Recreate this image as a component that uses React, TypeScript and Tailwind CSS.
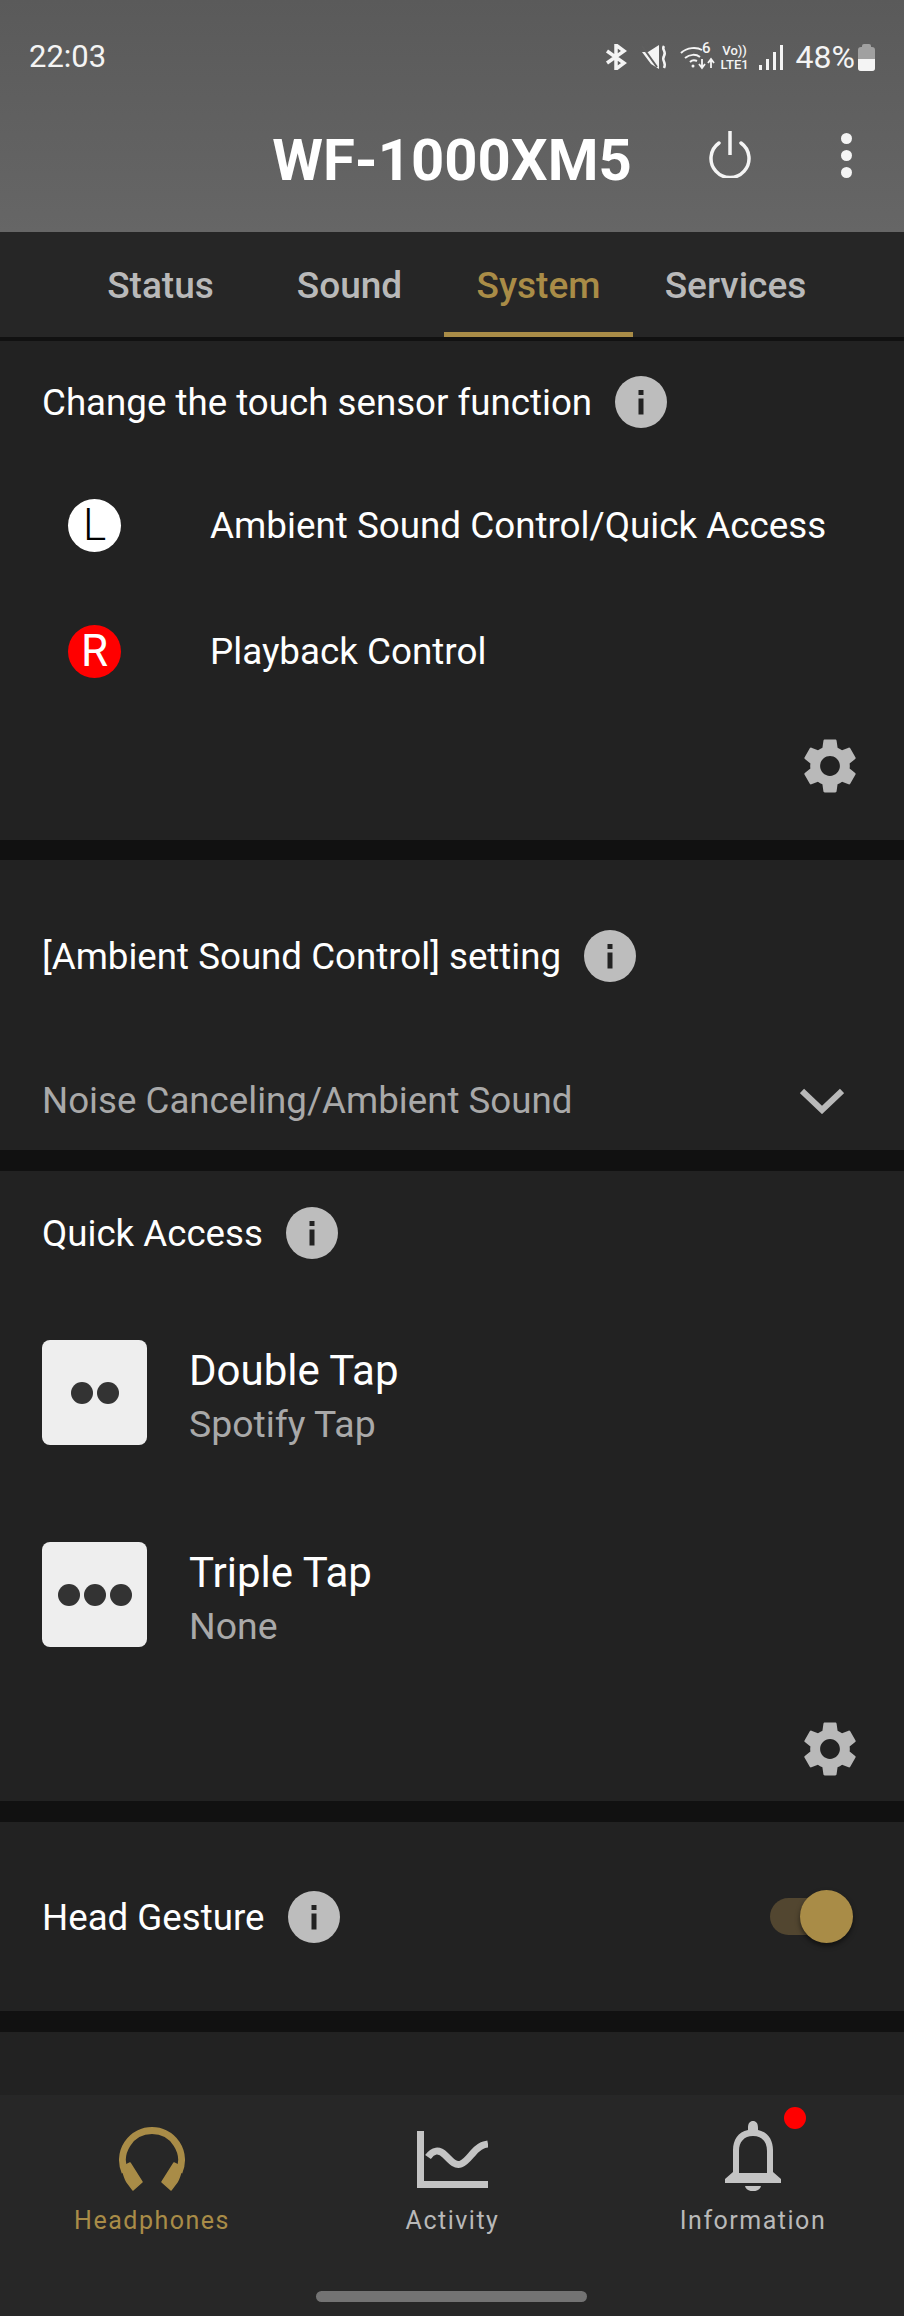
const GEAR =
  "M19.14 12.94c.04-.3.06-.61.06-.94 0-.32-.02-.64-.07-.94l2.03-1.58c.18-.14.23-.41.12-.61l-1.92-3.32c-.12-.22-.37-.29-.59-.22l-2.39.96c-.5-.38-1.03-.7-1.62-.94l-.36-2.54c-.04-.24-.24-.41-.48-.41h-3.84c-.24 0-.43.17-.47.41l-.36 2.54c-.59.24-1.13.57-1.62.94l-2.39-.96c-.22-.08-.47 0-.59.22L2.74 8.87c-.12.21-.08.47.12.61l2.03 1.58c-.05.3-.09.63-.09.94s.02.64.07.94l-2.03 1.58c-.18.14-.23.41-.12.61l1.92 3.32c.12.22.37.29.59.22l2.39-.96c.5.38 1.03.7 1.62.94l.36 2.54c.05.24.24.41.48.41h3.84c.24 0 .44-.17.47-.41l.36-2.54c.59-.24 1.13-.56 1.62-.94l2.39.96c.22.08.47 0 .59-.22l1.92-3.32c.12-.22.07-.47-.12-.61l-2.01-1.58zM12 15.6c-1.98 0-3.6-1.62-3.6-3.6s1.62-3.6 3.6-3.6 3.6 1.62 3.6 3.6-1.62 3.6-3.6 3.6z";

const Gear = () => (
  <svg viewBox="0 0 24 24" className="w-[66px] h-[66px] fill-[#b9b9b9]">
    <path d={GEAR} />
  </svg>
);

const Info = () => (
  <svg viewBox="0 0 52 52" className="w-[52px] h-[52px] shrink-0">
    <circle cx="26" cy="26" r="26" fill="#bdbdbd" />
    <rect x="23.5" y="14" width="5" height="5" fill="#222" />
    <rect x="23.5" y="22.5" width="5" height="16" fill="#222" />
  </svg>
);

const Title = ({ text }: { text: string }) => (
  <div className="flex items-center gap-[23px]">
    <span className="pt-[2px] text-[36.7px] leading-[44px] text-white">{text}</span>
    <Info />
  </div>
);

const Divider = () => <div className="h-[21px] shrink-0 bg-[#111111]" />;

const SensorRow = ({ letter, label, circle }: { letter: string; label: string; circle: string }) => (
  <div className="flex h-[126px] items-center pl-[68px]">
    <div className={`flex h-[53px] w-[53px] items-center justify-center rounded-full text-[44px] ${circle}`}>
      {letter}
    </div>
    <span className="ml-[89px] pt-[2px] text-[36.8px] text-white">{label}</span>
  </div>
);

const TapRow = ({ dots, title, value }: { dots: number; title: string; value: string }) => (
  <div className="flex h-[105px] items-center gap-[42px] pl-[42px]">
    <div className="flex h-[105px] w-[105px] items-center justify-center gap-[4px] rounded-[8px] bg-[#eeeeee]">
      {Array.from({ length: dots }).map((_, i) => (
        <div key={i} className="h-[22px] w-[22px] rounded-full bg-[#333333]" />
      ))}
    </div>
    <div className="flex flex-col pt-[8px]">
      <span className="text-[42px] leading-[52px] text-white">{title}</span>
      <span className="mt-[2px] text-[37.4px] leading-[50px] text-[#a9a9a9]">{value}</span>
    </div>
  </div>
);

const StatusBar = () => (
  <div className="flex h-[112px] items-center justify-between pl-[29px] pr-[29px] pt-[2px] text-[#f4f4f4]">
    <span className="text-[31px]">22:03</span>
    <div className="flex items-center">
      {/* bluetooth */}
      <svg viewBox="0 0 22 26" className="h-[26px] w-[22px]" fill="none" stroke="#f4f4f4" strokeWidth="3.5">
        <path d="M2 7l17 12-8 6V1l8 6L2 19" />
      </svg>
      {/* muted speaker with vibrate */}
      <svg viewBox="0 0 25 24" className="ml-[15px] h-[24px] w-[25px]" fill="#f4f4f4">
        <path d="M0 7h6l11-7v24L9 19z" />
        <path d="M0 1l15 21" stroke="#5f5f5f" strokeWidth="2" />
        <path d="M22 1c-3 4 3 5 0 10s3 6 0 12" fill="none" stroke="#f4f4f4" strokeWidth="2.5" />
      </svg>
      {/* wifi 6 */}
      <div className="relative ml-[13px] h-[26px] w-[35px]">
        <svg viewBox="0 0 35 26" className="h-[26px] w-[35px]" fill="none" stroke="#f4f4f4" strokeWidth="2">
          <path d="M1 9c6-6 16-6 21-3M5 14c5-4 11-4 15-1M10 18c2-2 5-2 7-1" />
          <circle cx="13" cy="22" r="1.5" fill="#f4f4f4" stroke="none" />
          <path d="M22 15v9M19 20l3 4 3-4M31 24v-9M28 19l3-4 3 4" strokeWidth="1.8" />
        </svg>
        <span className="absolute right-[4px] top-[-5px] text-[15px] font-medium leading-[18px]">6</span>
      </div>
      {/* volte */}
      <div className="ml-[5px] flex w-[30px] flex-col items-center text-[13px] font-medium leading-[13px]">
        <span className="mt-[1px]">Vo))</span>
        <span className="mt-[1px]">LTE1</span>
      </div>
      {/* signal */}
      <div className="ml-[9px] flex h-[25px] items-end gap-[4px]">
        <div className="h-[5px] w-[3px] bg-[#f4f4f4]" />
        <div className="h-[11px] w-[3px] bg-[#f4f4f4]" />
        <div className="h-[18px] w-[3px] bg-[#f4f4f4]" />
        <div className="h-[25px] w-[3px] bg-[#f4f4f4]" />
      </div>
      <span className="ml-[13px] text-[32px] leading-[36px]">48%</span>
      {/* battery */}
      <div className="relative ml-[3px] flex flex-col items-center">
        <div className="h-[3px] w-[9px] rounded-t-[2px] bg-[#a0a0a0]" />
        <div className="relative h-[24px] w-[17px] overflow-hidden rounded-[3px] bg-[#a0a0a0]">
          <div className="absolute inset-x-0 bottom-0 h-[12px] bg-[#f4f4f4]" />
        </div>
      </div>
    </div>
  </div>
);

const NavItem = ({ label, color, w, children }: { label: string; color: string; w: string; children: React.ReactNode }) => (
  <div className={`flex flex-col items-center ${w}`}>
    <div className="flex h-[69px] w-full items-end justify-center">{children}</div>
    <span className={`mt-[11px] text-[25px] leading-[38px] tracking-[1.5px] ${color}`}>{label}</span>
  </div>
);

export default function App() {
  return (
    <div className="flex h-[2316px] w-[904px] flex-col overflow-hidden bg-[#222222] font-['Roboto',sans-serif]">
      <div className="h-[232px] shrink-0 bg-gradient-to-b from-[#5a5a5a] to-[#666666]">
        <StatusBar />
        <div className="relative flex h-[96px] items-center justify-center">
          <span className="text-[58px] font-bold leading-[64px] text-white">WF-1000XM5</span>
          <svg viewBox="0 0 44 48" className="absolute left-[708px] top-[18px] h-[48px] w-[44px]" fill="none" stroke="#f4f4f4" strokeWidth="3.5">
            <path d="M22 1v24" />
            <path d="M11 13a19 19 0 1 0 22 0" strokeLinecap="round" />
          </svg>
          <div className="absolute left-[841px] top-[21px] flex flex-col gap-[6px]">
            <div className="h-[11px] w-[11px] rounded-full bg-[#f4f4f4]" />
            <div className="h-[11px] w-[11px] rounded-full bg-[#f4f4f4]" />
            <div className="h-[11px] w-[11px] rounded-full bg-[#f4f4f4]" />
          </div>
        </div>
      </div>

      <div className="flex h-[105px] shrink-0 bg-[#262626] pl-[66px] text-[37px] font-medium text-[#b9b9b9]">
        <div className="flex w-[189px] items-center justify-center pt-[3px]">Status</div>
        <div className="flex w-[189px] items-center justify-center pt-[3px]">Sound</div>
        <div className="flex w-[189px] items-center justify-center border-b-[5px] border-[#a98c47] pt-[7px] text-[#a98c47]">System</div>
        <div className="flex w-[205px] items-center justify-center pt-[3px]">Services</div>
      </div>
      <div className="h-[4px] shrink-0 bg-[#111111]" />

      <section className="h-[499px] shrink-0">
        <div className="flex h-[121px] items-center pl-[42px]">
          <Title text="Change the touch sensor function" />
        </div>
        <SensorRow letter="L" label="Ambient Sound Control/Quick Access" circle="bg-white font-light text-black" />
        <SensorRow letter="R" label="Playback Control" circle="bg-[#ff0000] text-white" />
        <div className="flex justify-end pr-[41px] pt-[19px]">
          <Gear />
        </div>
      </section>
      <div className="h-[20px] shrink-0 bg-[#111111]" />

      <section className="h-[290px] shrink-0 pl-[42px] pt-[70px]">
        <Title text="[Ambient Sound Control] setting" />
        <div className="mt-[96px] flex items-center justify-between pr-[60px]">
          <span className="text-[36.7px] leading-[46px] text-[#a9a9a9]">Noise Canceling/Ambient Sound</span>
          <svg viewBox="0 0 44 26" className="h-[26px] w-[44px]" fill="none" stroke="#b9b9b9" strokeWidth="6">
            <path d="M2 3l20 19L42 3" />
          </svg>
        </div>
      </section>
      <Divider />

      <section className="h-[630px] shrink-0">
        <div className="flex h-[124px] items-center pl-[42px]">
          <Title text="Quick Access" />
        </div>
        <div className="mt-[45px] flex flex-col gap-[97px]">
          <TapRow dots={2} title="Double Tap" value="Spotify Tap" />
          <TapRow dots={3} title="Triple Tap" value="None" />
        </div>
        <div className="mt-[69px] flex justify-end pr-[41px]">
          <Gear />
        </div>
      </section>
      <Divider />

      <section className="flex h-[189px] shrink-0 items-center justify-between pl-[42px] pr-[51px]">
        <Title text="Head Gesture" />
        <div className="relative h-[53px] w-[83px]">
          <div className="absolute left-0 top-[8px] h-[37px] w-[60px] rounded-full bg-[#524630]" />
          <div className="absolute right-0 top-0 h-[53px] w-[53px] rounded-full bg-[#a98c47] shadow-[0_3px_5px_rgba(0,0,0,0.5)]" />
        </div>
      </section>
      <Divider />
      <div className="min-h-0 flex-1" />

      <nav className="relative h-[221px] shrink-0 bg-[#272727] pt-[27px]">
        <div className="flex pl-[75px]">
          <NavItem label="Headphones" color="text-[#a98c47]" w="w-[154px]">
            <svg viewBox="0 0 66 64" className="h-[64px] w-[66px]" fill="#a98c47" stroke="#a98c47" strokeLinejoin="round">
              <path d="M6 45A29.5 29.5 0 1 1 60 45" fill="none" strokeWidth="7" />
              <path d="M3 40l8-4 12 19-9 8-6-8c-3-5-4-10-5-15zM63 40l-8-4-12 19 9 8 6-8c3-5 4-10 5-15z" strokeWidth="1.5" />
            </svg>
          </NavItem>
          <div className="ml-[177px]">
            <NavItem label="Activity" color="text-[#b9b9b9]" w="w-[93px]">
              <svg viewBox="0 0 71 57" className="mb-[3px] h-[57px] w-[71px]" fill="none" stroke="#c4c4c4" strokeWidth="7">
                <path d="M3.5 0v53.5H71" />
                <path d="M11 26C16 19 22 18 28 24S38 35 44 33 55 22 60 18 66 14 71 13" />
              </svg>
            </NavItem>
          </div>
          <div className="relative ml-[182px]">
            <NavItem label="Information" color="text-[#b9b9b9]" w="w-[144px]">
              <svg viewBox="0 0 56 70" className="h-[70px] w-[56px]" fill="#c4c4c4">
                <path fillRule="evenodd" d="M28 0c3 0 5 2 5 7v2c10 2 15 10 15 20v22l8 7v4H0v-4l8-7V29c0-10 5-18 15-20V7c0-5 2-7 5-7zm0 15c-9 0-14 6-14 15v22h28V30c0-9-5-15-14-15z" />
                <path d="M20 65h16c-1 7-15 7-16 0z" />
              </svg>
            </NavItem>
            <div className="absolute left-[103px] top-[-15px] h-[22px] w-[22px] rounded-full bg-[#ff0000]" />
          </div>
        </div>
        <div className="absolute bottom-[14px] left-[316px] h-[11px] w-[271px] rounded-full bg-[#737373]" />
      </nav>
    </div>
  );
}
